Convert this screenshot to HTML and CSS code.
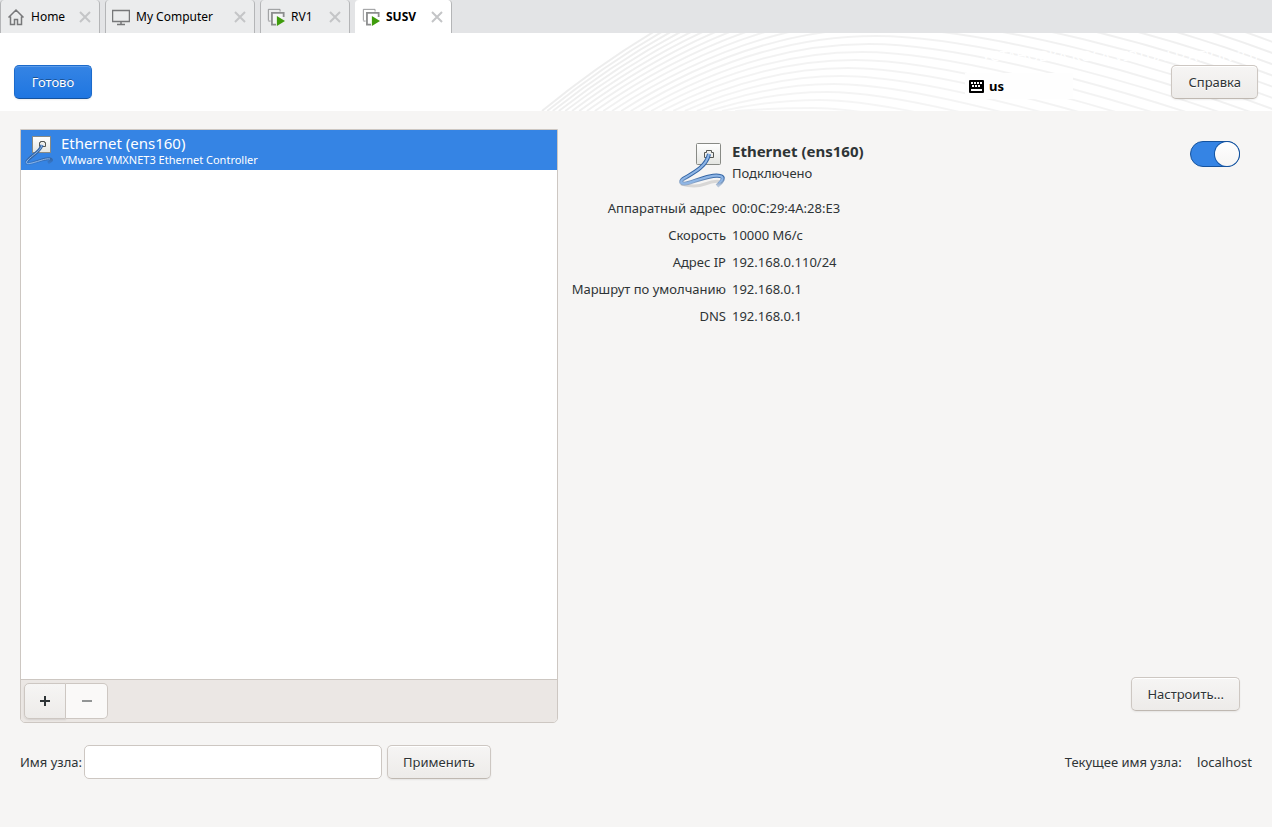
FILE: index.html
```html
<!DOCTYPE html>
<html lang="ru">
<head>
    <meta charset="utf-8">
    <title>SUSV</title>
    <link rel="stylesheet" href="styles.css">
</head>
<body>
    <!-- Icons shared by several places -->
    <svg class="defs" width="0" height="0" aria-hidden="true">
        <defs>
            <linearGradient id="plate" x1="0" y1="0" x2="0" y2="1">
                <stop offset="0" stop-color="#ffffff"/>
                <stop offset="1" stop-color="#e4e5e1"/>
            </linearGradient>
            <linearGradient id="tail" x1="0" y1="0" x2="0" y2="1">
                <stop offset="0.7" stop-color="#3465a4"/>
                <stop offset="1" stop-color="#3465a4" stop-opacity="0.3"/>
            </linearGradient>
            <symbol id="wired" viewBox="0 0 48 48">
                <path d="M3 43q14 4 24 0t17-2" fill="none" stroke="#000" stroke-opacity="0.12" stroke-width="3"/>
                <rect x="18.500" y="2.500" width="24" height="21" rx="1" fill="url(#plate)" stroke="#888a85"/>
                <path d="M26.500 16.500v-5h2v-2h5v2h2v5z" fill="#eeeeec" stroke="#555753"/>
                <path d="M31 13C28 27 13 33 5 38c-4 3-1 6 5 4 13-4 25-9 32-7 5 1 3 5-3 10" fill="none" stroke="url(#tail)" stroke-width="4"/>
                <path d="M31 13C28 27 13 33 5 38c-4 3-1 6 5 4 13-4 25-9 32-7 4 1 3 4-1 7" fill="none" stroke="#8fb6e6" stroke-width="2"/>
            </symbol>
            <symbol id="wired-small" viewBox="0 0 32 32">
                <rect x="7.500" y="2.500" width="18" height="16" fill="url(#plate)" stroke="#888a85"/>
                <path d="M14.500 12.500v-4h1v-1h4v1h1v4z" fill="#eeeeec" stroke="#555753"/>
                <path d="M17 11C15 18 8 20 2 27c-2 3 1 3 5 2 8-2 14-5 18-4 3 1 1 2-2 4" fill="none" stroke="url(#tail)" stroke-width="3"/>
                <path d="M17 11C15 18 8 20 2 27c-2 3 1 3 5 2 8-2 14-5 18-4" fill="none" stroke="#8fb6e6"/>
            </symbol>
            <symbol id="vm" viewBox="0 0 20 20">
                <path d="M1.500 14V1.500h13V4M1.500 14.500H4" fill="none" stroke="#8c8d8e"/>
                <path d="M10 18.500H5.500v-13h13V10" fill="#fff" fill-opacity="0.5" stroke="#8c8d8e" stroke-width="2"/>
                <path d="M11 9l9 5.500-9 5.500z" fill="#3f9c0c"/>
            </symbol>
            <symbol id="cross" viewBox="0 0 12 12">
                <path d="M1 1l10 10M11 1L1 11" stroke="#c4c5c7" stroke-width="2"/>
            </symbol>
        </defs>
    </svg>

    <nav class="tabs">
        <div class="tab tab-home">
            <svg class="tab-icon" viewBox="0 0 18 18"><path d="M1.500 9.500L9 2l7.500 7.500M3.500 8.500v8h4v-5h3v5h4v-8" fill="none" stroke="#77787a" stroke-width="1.500"/></svg>
            <a href="#">Home</a>
            <button class="tab-close" aria-label="Close"><svg><use href="#cross"/></svg></button>
        </div>
        <div class="tab tab-computer">
            <svg class="tab-icon" viewBox="0 0 18 18"><path d="M.5 2.500h17v11H.5zM9 14v2.500M5 16.500h8" fill="none" stroke="#77787a" stroke-width="1.500"/></svg>
            <a href="#">My Computer</a>
            <button class="tab-close" aria-label="Close"><svg><use href="#cross"/></svg></button>
        </div>
        <div class="tab tab-rv">
            <svg class="tab-icon"><use href="#vm"/></svg>
            <a href="#">RV1</a>
            <button class="tab-close" aria-label="Close"><svg><use href="#cross"/></svg></button>
        </div>
        <div class="tab tab-susv active">
            <svg class="tab-icon"><use href="#vm"/></svg>
            <a href="#">SUSV</a>
            <button class="tab-close" aria-label="Close"><svg><use href="#cross"/></svg></button>
        </div>
    </nav>

    <header class="header">
        <svg class="waves" id="waves" aria-hidden="true"></svg>
        <button class="btn primary">Готово</button>
        <div class="header-side">
            <p class="product">УСТАНОВКА ROSA VIRTUALIZATION 3.0</p>
            <div class="header-row">
                <div class="layout">
                    <svg class="keyboard" viewBox="0 0 15 13">
                        <rect width="15" height="13" rx="1"/>
                        <path d="M2 3h11M3 6h9" stroke="#fff" stroke-width="2" stroke-dasharray="2 1"/>
                        <path d="M2 10h11" stroke="#fff" stroke-width="2"/>
                    </svg>
                    <span>us</span>
                </div>
                <button class="btn">Справка</button>
            </div>
        </div>
    </header>

    <main class="content">
        <section class="devices">
            <ul class="device-list">
                <li class="device selected">
                    <svg class="device-icon"><use href="#wired-small"/></svg>
                    <div>
                        <div class="device-name">Ethernet (ens160)</div>
                        <div class="device-desc">VMware VMXNET3 Ethernet Controller</div>
                    </div>
                </li>
            </ul>
            <div class="toolbar">
                <button class="tool" aria-label="Добавить"><svg viewBox="0 0 12 12"><path d="M6 1v10M1 6h10" stroke="#2e3436" stroke-width="2"/></svg></button>
                <button class="tool" aria-label="Удалить" disabled><svg viewBox="0 0 12 12"><path d="M1 6h10" stroke="#929595" stroke-width="2"/></svg></button>
            </div>
        </section>

        <section class="details">
            <div class="details-head">
                <svg class="details-icon"><use href="#wired"/></svg>
                <div class="details-title">
                    <h1>Ethernet (ens160)</h1>
                    <p>Подключено</p>
                </div>
                <input class="switch" type="checkbox" role="switch" aria-label="Ethernet (ens160)" checked>
            </div>
            <dl class="props">
                <dt>Аппаратный адрес</dt><dd>00:0C:29:4A:28:E3</dd>
                <dt>Скорость</dt><dd>10000 М6/с</dd>
                <dt>Адрес IP</dt><dd>192.168.0.110/24</dd>
                <dt>Маршрут по умолчанию</dt><dd>192.168.0.1</dd>
                <dt>DNS</dt><dd>192.168.0.1</dd>
            </dl>
            <button class="btn configure">Настроить...</button>
        </section>
    </main>

    <footer class="hostname">
        <label for="host">Имя узла:</label>
        <input id="host" type="text">
        <button class="btn">Применить</button>
        <p class="current">Текущее имя узла: <span>localhost</span></p>
    </footer>

    <script src="waves.js"></script>
</body>
</html>
```

FILE: styles.css
```css
* {
    box-sizing: border-box;
}

body {
    margin: 0;
    min-height: 100vh;
    display: flex;
    flex-direction: column;
    background: #f6f5f4;
    color: #2e3436;
    font-family: "Noto Sans", sans-serif;
    font-size: 13px;
    line-height: 18px;
}

p, h1, ul, dl, dd {
    margin: 0;
    padding: 0;
}

button, input {
    font: inherit;
    color: inherit;
}

.defs {
    position: absolute;
}

/* Tab strip */
.tabs {
    display: flex;
    gap: 5px;
    height: 33px;
    background: #e3e4e6;
}

.tab {
    display: flex;
    align-items: center;
    padding: 0 8px 0 6px;
    background: #ebeced;
    border: 1px solid #b4b5b7;
    border-width: 0 1px;
    border-radius: 4px 4px 0 0;
    font-size: 12px;
}

.tab-home { width: 100px; }
.tab-computer { width: 150px; }
.tab-rv { width: 90px; }
.tab-susv { width: 97px; }

.tab.active {
    background: #fff;
    border-left-color: #fff;
    font-weight: bold;
}

.tab a {
    color: #000;
    text-decoration: none;
    white-space: nowrap;
}

.tab-icon {
    width: 18px;
    height: 18px;
    margin-right: 6px;
    flex-shrink: 0;
}

.tab-close {
    margin-left: auto;
    padding: 0;
    border: none;
    background: none;
    display: flex;
}

.tab-close svg {
    width: 12px;
    height: 12px;
}

/* Header */
.header {
    position: relative;
    display: flex;
    justify-content: space-between;
    align-items: flex-end;
    height: 78px;
    padding: 12px 14px;
    background: #fff;
}

.waves {
    position: absolute;
    top: 0;
    right: 0;
    width: 732px;
    height: 78px;
}

.header .btn,
.header-side {
    position: relative;
}

.product {
    color: #fff;
    font-size: 15px;
    line-height: 20px;
    text-align: right;
}

.header-row {
    display: flex;
    justify-content: space-between;
    align-items: flex-end;
    width: 293px;
}

.layout {
    display: flex;
    align-items: center;
    gap: 5px;
    width: 108px;
    height: 26px;
    padding-left: 4px;
    background: #fefefe;
    color: #000;
    font-weight: bold;
}

.keyboard {
    width: 15px;
    height: 13px;
}

.btn {
    height: 34px;
    padding: 0 15px;
    border: 1px solid #cdc7c2;
    border-bottom-color: #bfb8b1;
    border-radius: 5px;
    background: linear-gradient(#f6f5f4, #edebe9);
    box-shadow: inset 0 1px #fff, 0 1px 2px rgba(0, 0, 0, 0.07);
    text-shadow: 0 1px #fff;
    white-space: nowrap;
}

.header .btn {
    padding: 0 16px;
}

.btn.primary {
    min-width: 78px;
    color: #fff;
    border-color: #1b6acb;
    border-bottom-color: #15539e;
    background: linear-gradient(#3584e4, #1f76e1);
    box-shadow: inset 0 1px rgba(255, 255, 255, 0.2), 0 1px 2px rgba(0, 0, 0, 0.07);
    text-shadow: 0 -1px rgba(0, 0, 0, 0.35);
}

/* Device list and details */
.content {
    flex: 1;
    display: grid;
    grid-template-columns: 538fr 676fr;
    gap: 18px;
    padding: 18px 20px 0;
}

.devices {
    display: flex;
    flex-direction: column;
    border: 1px solid #cdc7c2;
    border-radius: 0 0 5px 5px;
    overflow: hidden;
}

.device-list {
    flex: 1;
    list-style: none;
    background: #fff;
}

.device {
    display: flex;
    align-items: center;
    gap: 4px;
    height: 40px;
    padding: 0 4px;
}

.device.selected {
    background: #3584e4;
    color: #fff;
}

.device-icon {
    width: 32px;
    height: 32px;
}

.device-name {
    font-size: 15px;
    line-height: 18px;
}

.device-desc {
    font-size: 11px;
    line-height: 15px;
}

.toolbar {
    display: flex;
    padding: 3px;
    border-top: 1px solid #cdc7c2;
    background: #ebe7e4;
}

.tool {
    display: flex;
    align-items: center;
    justify-content: center;
    width: 42px;
    height: 36px;
    padding: 0;
    border: 1px solid #cdc7c2;
    border-radius: 5px 0 0 5px;
    background: linear-gradient(#f6f5f4, #edebe9);
    box-shadow: 0 1px 2px rgba(0, 0, 0, 0.1);
}

.tool:disabled {
    border-left: none;
    border-radius: 0 5px 5px 0;
    background: #faf9f8;
    box-shadow: none;
}

.tool svg {
    width: 12px;
    height: 12px;
}

.details {
    display: flex;
    flex-direction: column;
    padding: 12px 12px 12px 0;
}

.details-head {
    display: flex;
    align-items: flex-start;
    padding-left: 102px;
}

.details-icon {
    width: 48px;
    height: 48px;
    margin-right: 6px;
}

.details-title {
    flex: 1;
}

.details-title h1 {
    font-size: 15px;
    line-height: 20px;
}

.details-title p {
    line-height: 24px;
}

.switch {
    appearance: none;
    display: flex;
    justify-content: flex-end;
    width: 50px;
    height: 26px;
    margin: 0;
    border: 1px solid #15539e;
    border-radius: 13px;
    background: #3584e4;
}

.switch::before {
    content: "";
    width: 24px;
    height: 24px;
    border-radius: 50%;
    background: linear-gradient(#fff, #f6f5f4);
    box-shadow: 0 0 0 1px #15539e;
}

.switch:not(:checked) {
    justify-content: flex-start;
    background: #e1dedb;
}

.props {
    display: grid;
    grid-template-columns: 150px 1fr;
    gap: 9px 6px;
    margin-top: 10px;
    white-space: nowrap;
}

.props dt {
    justify-self: end;
}

.configure {
    margin-top: auto;
    align-self: flex-end;
}

/* Hostname row */
.hostname {
    display: flex;
    align-items: center;
    padding: 22px 20px 48px;
}

.hostname input {
    width: 298px;
    height: 34px;
    margin: 0 5px 0 2px;
    padding: 0 8px;
    border: 1px solid #cdc7c2;
    border-radius: 5px;
    background: #fff;
}

.current {
    margin-left: auto;
}

.current span {
    margin-left: 12px;
}
```

FILE: waves.js
```js
// Header background: a fan of arcs that is dense on the left and opens to the right
const svg = document.getElementById('waves');
for (let i = -3; i < 22; i++) {
    const startX = 2 + 5 * i + 0.2 * i * i;
    const topX = 420 - 7 * i;
    const topY = -93 + 8 * i;
    const endY = topY + 105 + 0.4 * topY;
    // the outermost arcs only show on the right
    const start = i < 0 ? `M${topX} ${topY}` :
        `M${startX} 78Q${(startX + topX) / 2} ${topY} ${topX} ${topY}`;
    const path = document.createElementNS('http://www.w3.org/2000/svg', 'path');
    path.setAttribute('d', start + `C${topX + 100} ${topY} 620 ${endY - 56} 760 ${endY}`);
    path.setAttribute('fill', 'none');
    path.setAttribute('stroke', '#000');
    path.setAttribute('stroke-opacity', 0.07 - 0.0015 * i);
    path.setAttribute('stroke-width', 2);
    svg.appendChild(path);
}
```
